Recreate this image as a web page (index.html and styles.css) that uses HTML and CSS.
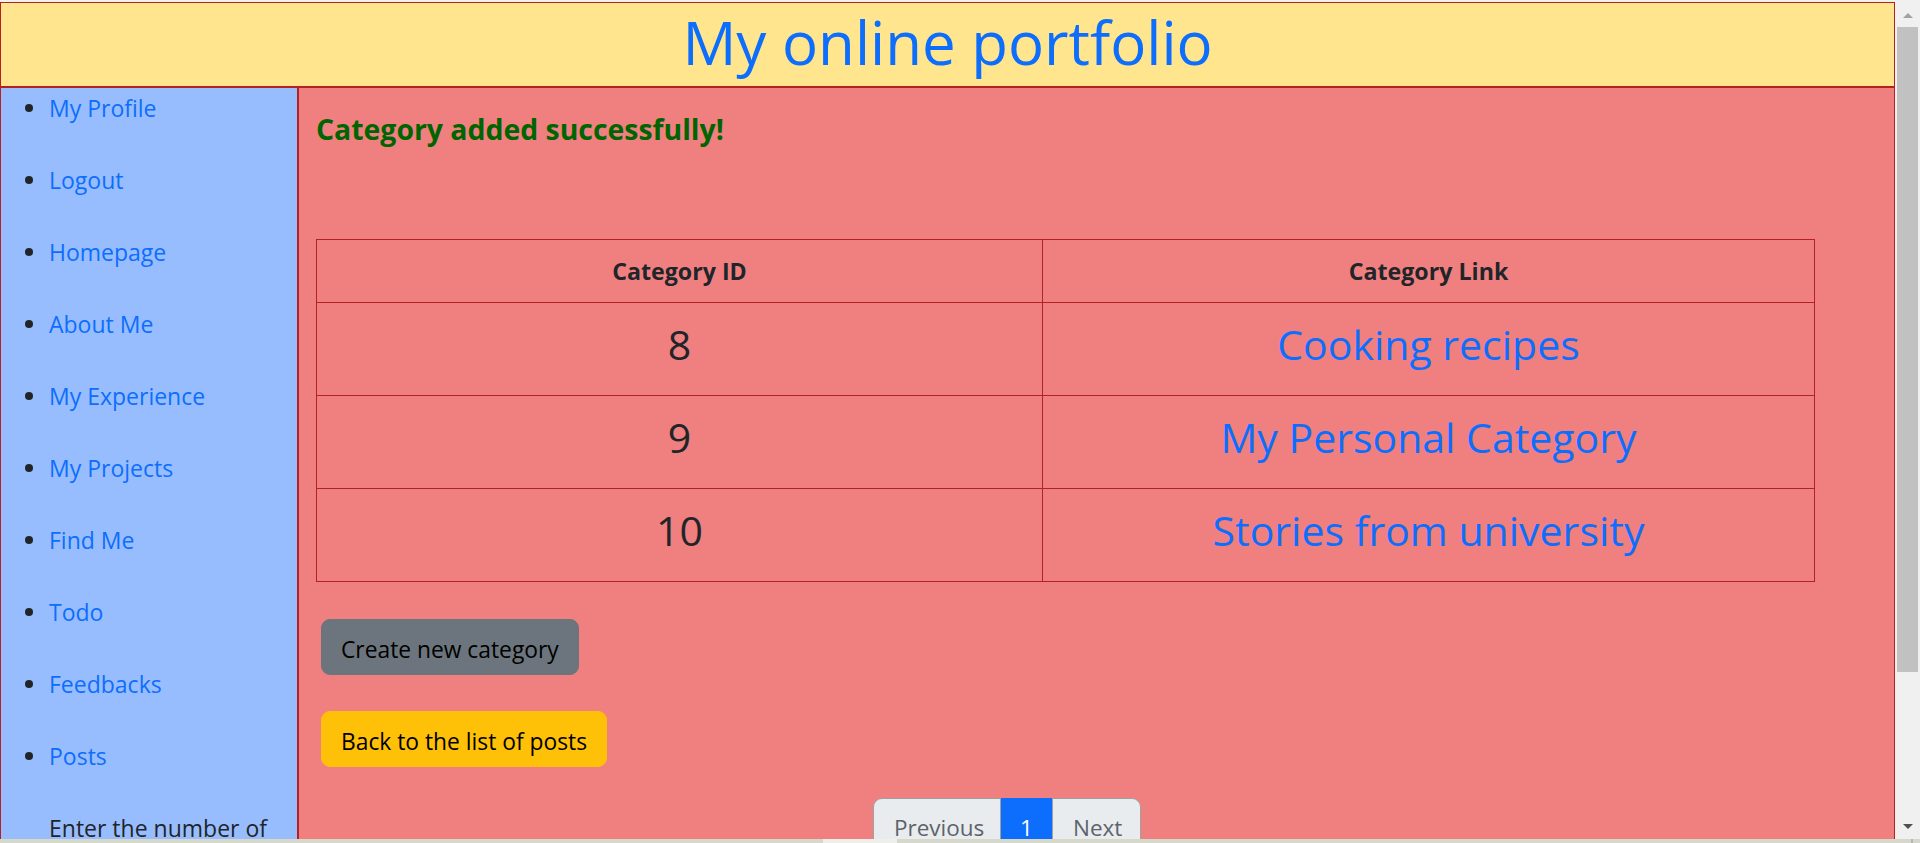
FILE: index.html
```html
<!DOCTYPE html>
<html lang="en">
<head>
<meta charset="utf-8">
<title>My online portfolio</title>
<link rel="stylesheet" href="styles.css">
</head>
<body>
<div class="page">
  <header class="site-header">
    <h1 class="site-title">My online portfolio</h1>
  </header>
  <div class="layout">
    <nav class="sidebar">
      <ul class="nav-list">
        <li class="nav-item"><a href="#">My Profile</a></li>
        <li class="nav-item"><a href="#">Logout</a></li>
        <li class="nav-item"><a href="#">Homepage</a></li>
        <li class="nav-item"><a href="#">About Me</a></li>
        <li class="nav-item"><a href="#">My Experience</a></li>
        <li class="nav-item"><a href="#">My Projects</a></li>
        <li class="nav-item"><a href="#">Find Me</a></li>
        <li class="nav-item"><a href="#">Todo</a></li>
        <li class="nav-item"><a href="#">Feedbacks</a></li>
        <li class="nav-item"><a href="#">Posts</a></li>
        <li class="nav-item nav-plain">Enter the number of</li>
      </ul>
    </nav>
    <main class="content">
      <p class="success-msg">Category added successfully!</p>
      <table class="cat-table">
        <thead>
          <tr class="row-head">
            <th class="col-id">Category ID</th>
            <th class="col-link">Category Link</th>
          </tr>
        </thead>
        <tbody>
          <tr class="row-data"><td>8</td><td><a href="#">Cooking recipes</a></td></tr>
          <tr class="row-data"><td>9</td><td><a href="#">My Personal Category</a></td></tr>
          <tr class="row-data"><td>10</td><td><a href="#">Stories from university</a></td></tr>
        </tbody>
      </table>
      <div class="actions">
        <a href="#" class="btn btn-secondary">Create new category</a>
        <a href="#" class="btn btn-warning">Back to the list of posts</a>
      </div>
      <ul class="pagination">
        <li class="page-item disabled first"><span class="page-link">Previous</span></li>
        <li class="page-item active"><span class="page-link">1</span></li>
        <li class="page-item disabled last"><span class="page-link">Next</span></li>
      </ul>
    </main>
  </div>
</div>
<div class="vscroll">
  <div class="vscroll-btn up"><span class="tri-up"></span></div>
  <div class="vscroll-thumb"></div>
  <div class="vscroll-track"></div>
  <div class="vscroll-btn down"><span class="tri-down"></span></div>
</div>
<div class="hstrip"><span class="hstrip-light"></span><span class="hstrip-mark"></span></div>
</body>
</html>
```

FILE: styles.css
```css
* { box-sizing: border-box; }

html, body {
  margin: 0;
  padding: 0;
  height: 843px;
  overflow: hidden;
}

body {
  background: #f0f0f0;
  font-family: "Open Sans", "Noto Sans", sans-serif;
  color: #212529;
}

a { color: #0d6efd; text-decoration: none; }

.page {
  width: 1895px;
  padding-top: 2px;
}

.site-header {
  height: 85px;
  background: #ffe68e;
  border: 1px solid #b22222;
  display: flex;
  justify-content: center;
  padding-bottom: 5px;
}

.site-title {
  margin: 0;
  font-size: 60px;
  font-weight: 400;
  line-height: 78px;
  color: #0d6efd;
}

.layout {
  display: flex;
  height: 780px;
}

.sidebar {
  width: 298px;
  flex: none;
  background: #98bdfe;
  border: 1px solid #b22222;
}

.nav-list {
  list-style: none;
  margin: 0;
  padding: 2px 0 0 0;
}

.nav-item {
  display: flex;
  align-items: center;
  height: 36px;
  margin-bottom: 36px;
  padding-left: 24px;
  font-size: 23px;
  line-height: 36px;
}

.nav-item::before {
  content: "";
  width: 8px;
  height: 8px;
  border-radius: 50%;
  background: #212529;
  margin-right: 16px;
  flex: none;
}

.nav-plain { padding-left: 48px; color: #212529; }
.nav-plain::before { display: none; }

.content {
  flex: 1;
  background: #f08080;
  border: 1px solid #b22222;
  padding: 0 17px;
}

.success-msg {
  margin: 23px 0 0 0;
  height: 36px;
  line-height: 36px;
  font-size: 28.4px;
  font-weight: 700;
  color: #006400;
}

.cat-table {
  margin-top: 92px;
  width: 1499px;
  border-collapse: collapse;
  text-align: center;
}

.cat-table th,
.cat-table td {
  border: 1px solid #b22222;
  padding: 0;
  vertical-align: middle;
}

.col-id { width: 726px; }

.row-head { height: 63px; }
.row-head th { font-size: 23.2px; font-weight: 700; }

.row-data { height: 93px; }
.row-data td { font-size: 41px; padding-bottom: 10px; }

.actions {
  display: flex;
  flex-direction: column;
  align-items: flex-start;
  gap: 36px;
  margin: 37px 0 0 5px;
}

.btn {
  display: block;
  height: 56px;
  line-height: 54px;
  padding: 3px 19px 0 19px;
  border: 1px solid transparent;
  border-radius: 9px;
  font-size: 22.8px;
  color: #000;
}

.btn-secondary { background: #6c757d; border-color: #6c757d; }
.btn-warning { background: #ffc107; border-color: #ffc107; }

.pagination {
  list-style: none;
  display: flex;
  margin: 31px 0 0 557px;
  padding: 0;
}

.page-link {
  display: block;
  height: 57px;
  line-height: 55px;
  padding: 1px 20px 0 20px;
  font-size: 22.5px;
  border: 1px solid #a0a0a0;
  background: #e9ecef;
  color: #5c636a;
}

.first .page-link { border-radius: 9px 0 0 9px; width: 128px; }
.active .page-link {
  background: #0d6efd;
  border-color: #0d6efd;
  color: #fff;
  width: 51px;
  padding: 1px 0 0 0;
  text-align: center;
}
.last .page-link { border-radius: 0 9px 9px 0; width: 89px; }

.vscroll {
  position: fixed;
  top: 0;
  right: 0;
  width: 25px;
  height: 840px;
  background: #f0f0f0;
  display: flex;
  flex-direction: column;
}

.vscroll-btn {
  height: 27px;
  flex: none;
  display: flex;
  justify-content: center;
  align-items: center;
}

.vscroll-btn.up { padding-top: 3px; }

.tri-up {
  width: 0;
  height: 0;
  border-left: 5.5px solid transparent;
  border-right: 5.5px solid transparent;
  border-bottom: 5px solid #a3a3a3;
}

.tri-down {
  width: 0;
  height: 0;
  border-left: 5.5px solid transparent;
  border-right: 5.5px solid transparent;
  border-top: 5px solid #505050;
}

.vscroll-thumb {
  height: 645px;
  margin: 0 2px 0 2px;
  background: #c1c1c1;
  flex: none;
}

.vscroll-track { flex: 1; }

.hstrip {
  position: fixed;
  left: 0;
  bottom: 0;
  width: 100%;
  height: 4px;
  background: #d5d8cb;
}

.hstrip-light {
  position: absolute;
  left: 823px;
  top: 0;
  width: 74px;
  height: 4px;
  background: #efefe9;
}

.hstrip-mark {
  position: absolute;
  left: 1911px;
  top: 0;
  width: 2px;
  height: 4px;
  background: #b5b8ad;
}
```
